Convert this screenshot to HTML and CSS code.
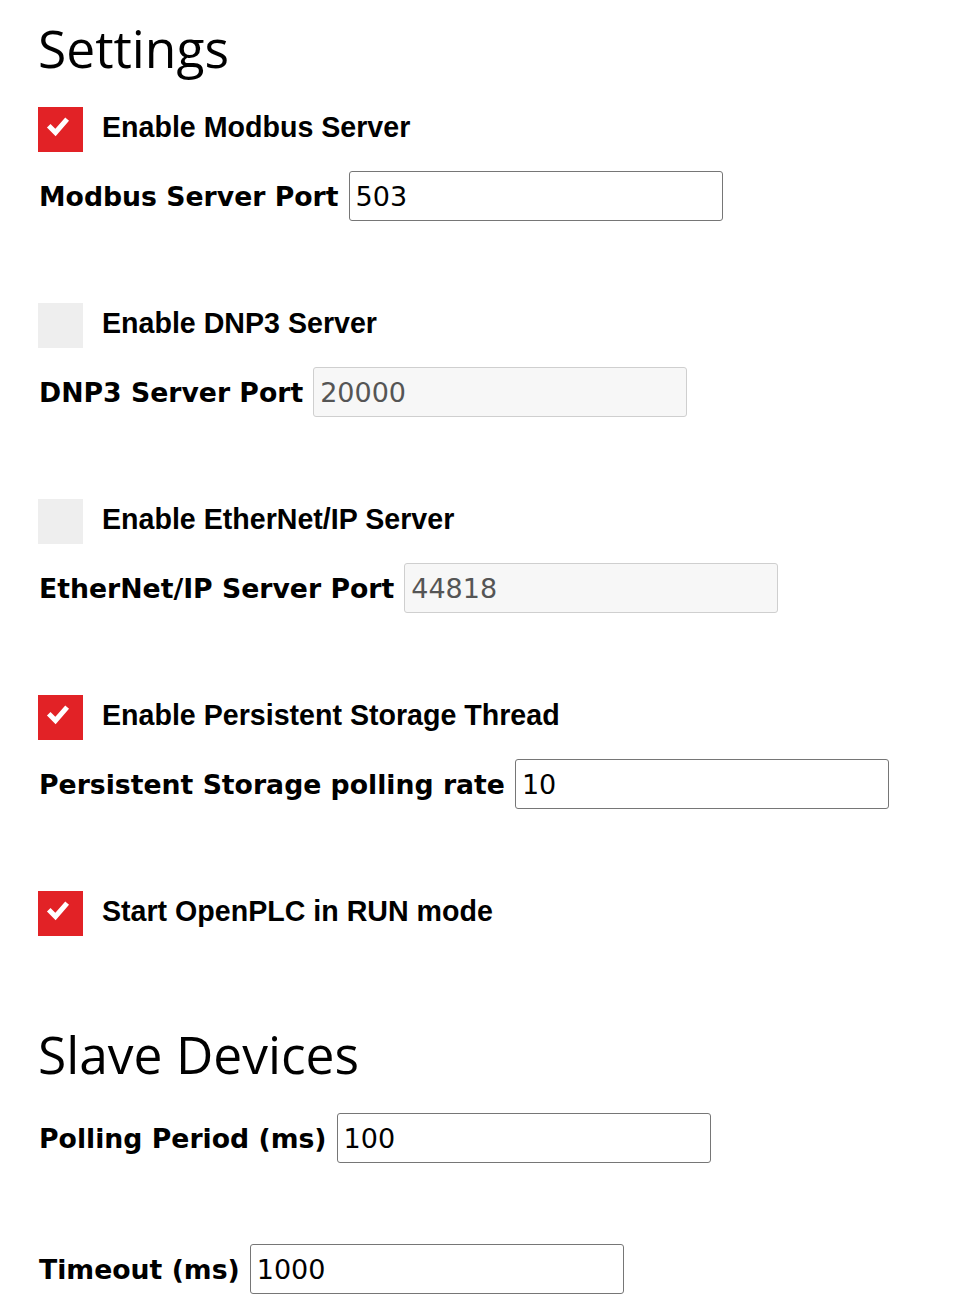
FILE: index.html
```html
<!DOCTYPE html>
<html>
<head>
<meta charset="utf-8">
<link rel="stylesheet" href="styles.css">
</head>
<body>
<div class="page">
  <h1 class="title">Settings</h1>

  <div class="group">
    <label class="check-row">
      <span class="box checked"><svg viewBox="0 0 45 45" width="45" height="45"><path d="M12.5 20.5 L17.5 25.5 L27.5 14" fill="none" stroke="#fff" stroke-width="5" stroke-linecap="square" stroke-linejoin="miter"/></svg></span>
      <span class="check-text">Enable Modbus Server</span>
    </label>
    <div class="field-row">
      <span class="field-label">Modbus Server Port</span>
      <input class="field" type="text" value="503">
    </div>
  </div>

  <div class="group">
    <label class="check-row">
      <span class="box"></span>
      <span class="check-text">Enable DNP3 Server</span>
    </label>
    <div class="field-row">
      <span class="field-label">DNP3 Server Port</span>
      <input class="field" type="text" value="20000" disabled>
    </div>
  </div>

  <div class="group">
    <label class="check-row">
      <span class="box"></span>
      <span class="check-text">Enable EtherNet/IP Server</span>
    </label>
    <div class="field-row">
      <span class="field-label">EtherNet/IP Server Port</span>
      <input class="field" type="text" value="44818" disabled>
    </div>
  </div>

  <div class="group">
    <label class="check-row">
      <span class="box checked"><svg viewBox="0 0 45 45" width="45" height="45"><path d="M12.5 20.5 L17.5 25.5 L27.5 14" fill="none" stroke="#fff" stroke-width="5" stroke-linecap="square" stroke-linejoin="miter"/></svg></span>
      <span class="check-text">Enable Persistent Storage Thread</span>
    </label>
    <div class="field-row">
      <span class="field-label">Persistent Storage polling rate</span>
      <input class="field" type="text" value="10">
    </div>
  </div>

  <div class="group">
    <label class="check-row">
      <span class="box checked"><svg viewBox="0 0 45 45" width="45" height="45"><path d="M12.5 20.5 L17.5 25.5 L27.5 14" fill="none" stroke="#fff" stroke-width="5" stroke-linecap="square" stroke-linejoin="miter"/></svg></span>
      <span class="check-text">Start OpenPLC in RUN mode</span>
    </label>
  </div>

  <h1 class="title slave">Slave Devices</h1>

  <div class="field-row first">
    <span class="field-label">Polling Period (ms)</span>
    <input class="field" type="text" value="100">
  </div>
  <div class="field-row spaced">
    <span class="field-label">Timeout (ms)</span>
    <input class="field" type="text" value="1000">
  </div>
</div>
</body>
</html>
```

FILE: styles.css
```css
html, body {
  margin: 0;
  padding: 0;
  background: #fff;
}

.page {
  padding: 23px 38px 0 38px;
  display: flex;
  flex-direction: column;
  align-items: flex-start;
}

.title {
  margin: 0;
  font-family: "Open Sans", "Noto Sans", sans-serif;
  font-weight: 400;
  font-size: 51.5px;
  line-height: 50px;
  height: 50px;
  color: #000;
}

.title.slave {
  margin-top: 93px;
}

.group {
  display: flex;
  flex-direction: column;
  align-items: flex-start;
  margin-top: 82px;
}

.title + .group {
  margin-top: 34px;
}

.check-row {
  display: flex;
  align-items: center;
  gap: 19px;
  height: 45px;
}

.box {
  width: 45px;
  height: 45px;
  background: #eeeeee;
  display: block;
  flex: none;
}

.box.checked {
  background: #e22226;
}

.box svg {
  display: block;
}

.check-text {
  font-family: "Liberation Sans", Arial, sans-serif;
  font-weight: 700;
  font-size: 28.6px;
  color: #000;
  position: relative;
  top: -2px;
}

.field-row {
  display: flex;
  align-items: center;
  gap: 10px;
  height: 50px;
  margin-top: 19px;
}

.field-row.first {
  margin-top: 34px;
}

.field-row.spaced {
  margin-top: 81px;
}

.field-label {
  font-family: "DejaVu Sans", Verdana, sans-serif;
  font-weight: 700;
  font-size: 26.7px;
  color: #000;
  padding-left: 1px;
}

.field {
  box-sizing: border-box;
  width: 374px;
  height: 50px;
  margin: 0;
  padding: 0 6px;
  border: 1px solid #767676;
  border-radius: 3px;
  background: #fff;
  font-family: "DejaVu Sans", Verdana, sans-serif;
  font-size: 27px;
  color: #000;
  outline: none;
}

.field:disabled {
  background: #f7f7f7;
  border-color: #cfcfcf;
  color: #555;
}
```
